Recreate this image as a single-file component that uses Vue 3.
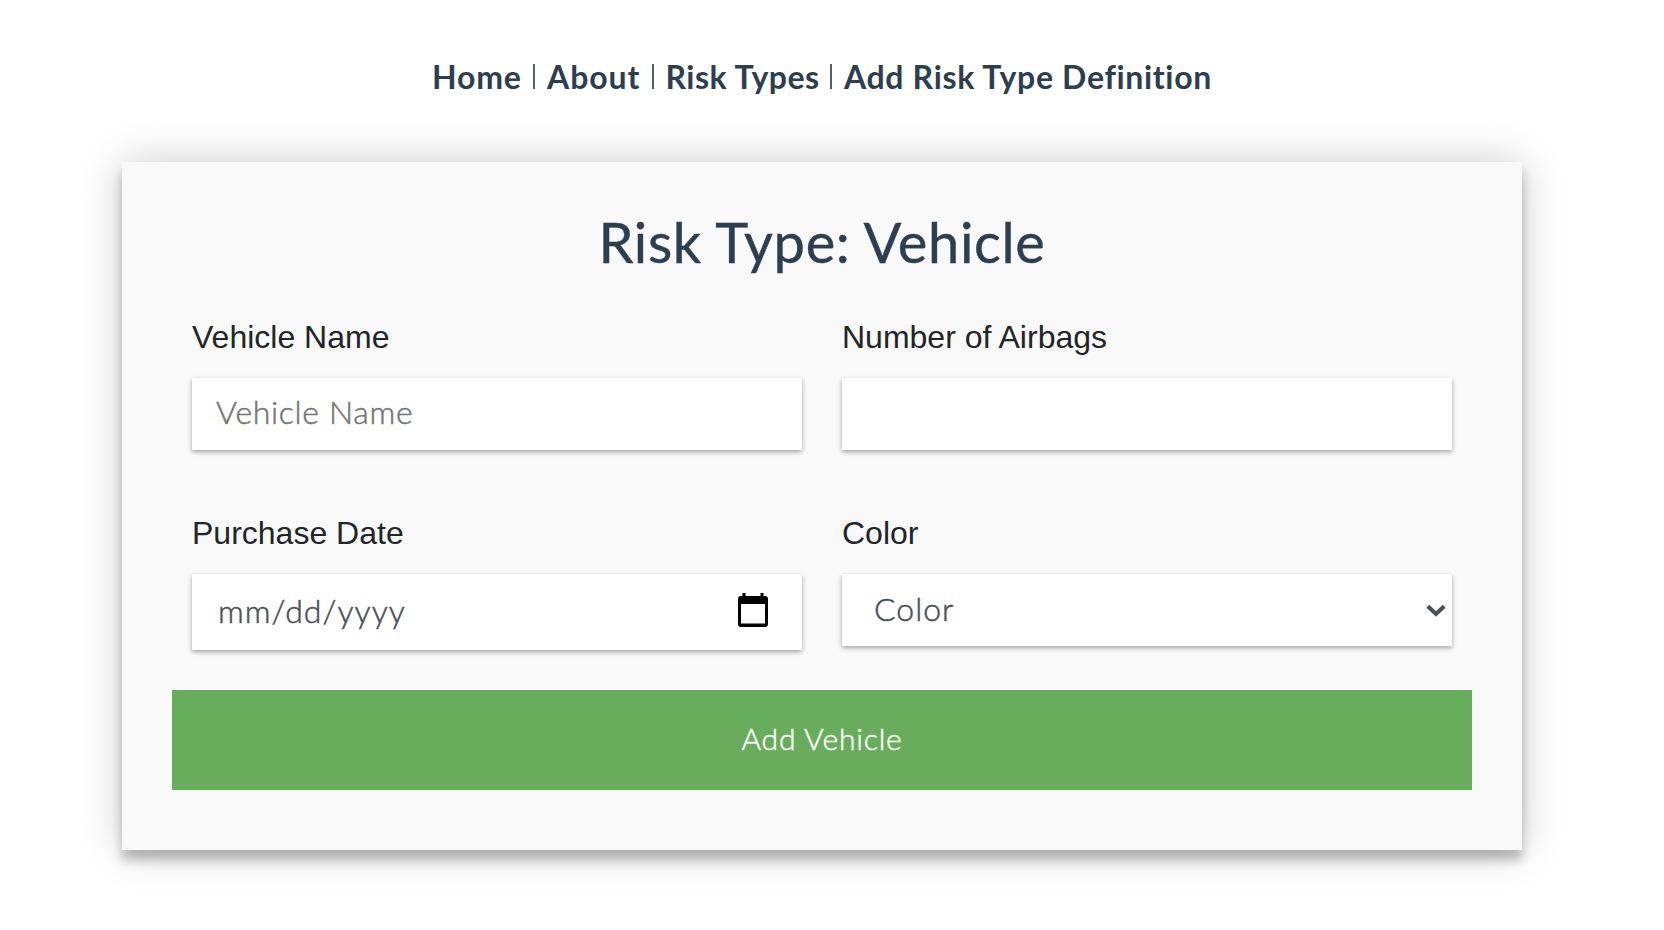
<script setup>
import { ref } from 'vue'

const links = [
  { label: 'Home', cls: 'home' },
  { label: 'About', cls: 'about' },
  { label: 'Risk Types', cls: 'types' },
  { label: 'Add Risk Type Definition', cls: 'definition' }
]
const name = ref('')
const airbags = ref('')
const color = ref('')
</script>

<template>
  <div class="page">
    <nav class="nav">
      <template v-for="(link, i) in links" :key="link.label">
        <span v-if="i" class="bar"></span>
        <a :class="link.cls">{{ link.label }}</a>
      </template>
    </nav>

    <form class="card" @submit.prevent>
      <h1><span>Risk Type: Vehicle</span></h1>
      <div class="fields">
        <div class="field">
          <label>Vehicle Name</label>
          <input v-model="name" class="control" placeholder="Vehicle Name" />
        </div>
        <div class="field">
          <label>Number of Airbags</label>
          <input v-model="airbags" class="control" />
        </div>
        <div class="field">
          <label>Purchase Date</label>
          <div class="control date">
            <span>mm/dd/yyyy</span>
            <svg class="calendar" width="30" height="34" viewBox="0 0 30 34">
              <path d="M4.5 0h3v3h15V0h3v3H27a3 3 0 0 1 3 3v25a3 3 0 0 1-3 3H3a3 3 0 0 1-3-3V6a3 3 0 0 1 3-3h1.5zM3 11v19.5h24V11z" fill-rule="evenodd" />
            </svg>
          </div>
        </div>
        <div class="field">
          <label>Color</label>
          <div class="control select">
            <select v-model="color"><option value="">Color</option></select>
            <svg class="chevron" width="20" height="13" viewBox="0 0 20 13">
              <path d="M1.8 2.2 10 10l8.2-7.8" fill="none" stroke="#495057" stroke-width="4" />
            </svg>
          </div>
        </div>
      </div>
      <button type="submit"><span>Add Vehicle</span></button>
    </form>
  </div>
</template>

<style>
body {
  margin: 0;
  background: #fff;
}
</style>

<style scoped>
.page {
  box-sizing: border-box;
  height: 930px;
  overflow: hidden;
  font-family: Lato, "Liberation Sans", sans-serif;
  color: #2c3e50;
}
.nav {
  display: flex;
  box-sizing: border-box;
  height: 162px;
  padding: 58px 0 0 432px;
  font-size: 32px;
  line-height: 38px;
  font-weight: 700;
  white-space: nowrap;
}
.nav a {
  flex: none;
}
.home { width: 89px; letter-spacing: 0.8px; }
.about { width: 93px; letter-spacing: 0.95px; }
.types { width: 153px; letter-spacing: 0.5px; }
.definition { letter-spacing: 0.66px; }
.bar {
  flex: none;
  width: 2px;
  height: 25px;
  margin: 6px 12px 0;
  background: #50606f;
}
.bar ~ .bar {
  margin: 6px 12px 0 11.5px;
}
.card {
  box-sizing: border-box;
  width: 1400px;
  height: 688px;
  margin: 0 auto 0 122px;
  padding: 49px 50px 0;
  background: #f9f9f9;
  box-shadow: 0 0 40px rgba(0, 0, 0, 0.2), 0 10px 10px rgba(0, 0, 0, 0.24);
}
h1 {
  margin: 0;
  height: 105px;
  font-size: 56px;
  font-weight: 400;
  line-height: 62px;
  letter-spacing: 0.65px;
  text-align: center;
  white-space: nowrap;
  -webkit-text-stroke: 0.4px currentColor;
}
.fields {
  display: grid;
  grid-template-columns: 610px 610px;
  grid-template-rows: 196px 178px;
  column-gap: 40px;
  padding: 0 20px;
}
.field {
  display: flex;
  flex-direction: column;
}
label {
  height: 62px;
  font: 32px/42px "Liberation Sans", Arial, sans-serif;
  color: #212529;
}
.control {
  box-sizing: border-box;
  width: 610px;
  height: 72px;
  padding: 0 24px 5px;
  border: 0;
  border-radius: 0;
  outline: 0;
  background: #fff;
  box-shadow: 0 2px 6px rgba(0, 0, 0, 0.12), 0 2px 4px rgba(0, 0, 0, 0.24);
  font-family: inherit;
  font-size: 32px;
  font-weight: 300;
  letter-spacing: 0.67px;
  color: #495057;
  -webkit-text-stroke: 0.5px currentColor;
}
.control::placeholder {
  color: #757575;
  opacity: 1;
}
.date {
  display: flex;
  align-items: center;
  justify-content: space-between;
  height: 76px;
  padding: 0 34px 4px 26px;
  letter-spacing: 1.05px;
}
.select {
  display: flex;
  align-items: center;
  padding: 0 6px 0 32px;
  letter-spacing: 1px;
}
select {
  flex: 1;
  padding: 0 0 4px;
  border: 0;
  outline: 0;
  appearance: none;
  background: none;
  font: inherit;
  letter-spacing: inherit;
  color: inherit;
}
button {
  display: block;
  width: 1300px;
  height: 100px;
  padding: 0 0 4px;
  border: 0;
  background: #67ad5b;
  color: #fff;
  font-family: inherit;
  font-size: 30px;
  font-weight: 300;
  letter-spacing: 0.8px;
  -webkit-text-stroke: 0.5px currentColor;
}
</style>
